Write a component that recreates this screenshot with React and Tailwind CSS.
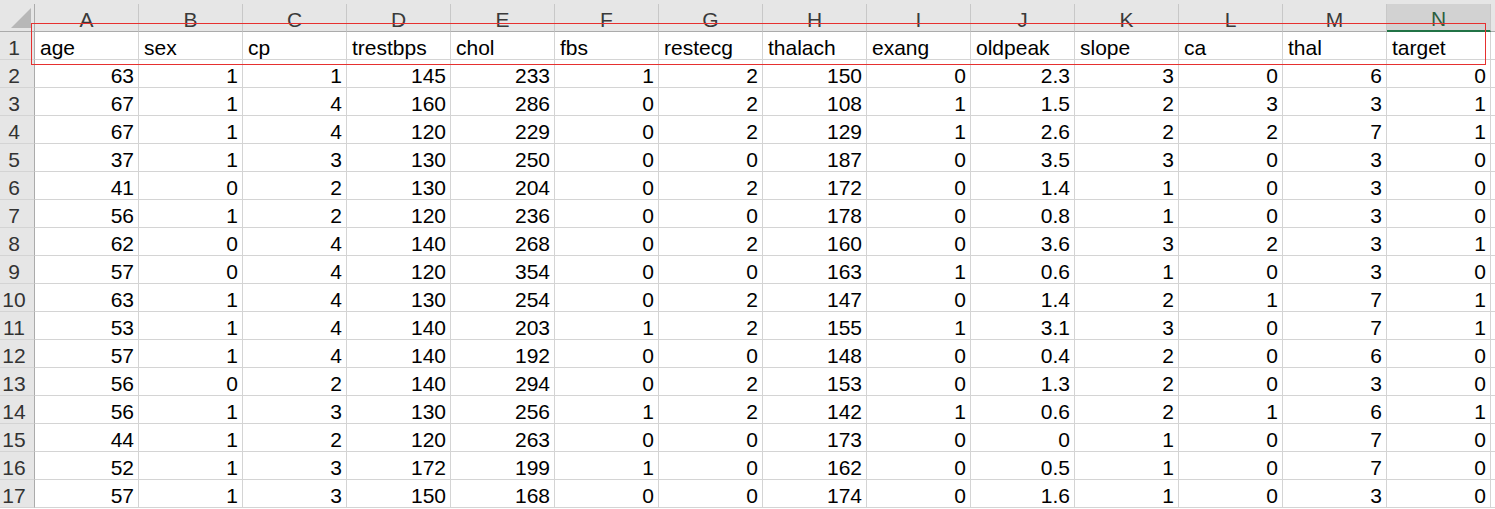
const columns = ["A", "B", "C", "D", "E", "F", "G", "H", "I", "J", "K", "L", "M", "N"];

const headers = [
  "age",
  "sex",
  "cp",
  "trestbps",
  "chol",
  "fbs",
  "restecg",
  "thalach",
  "exang",
  "oldpeak",
  "slope",
  "ca",
  "thal",
  "target",
];

const rows = [
  [63, 1, 1, 145, 233, 1, 2, 150, 0, "2.3", 3, 0, 6, 0],
  [67, 1, 4, 160, 286, 0, 2, 108, 1, "1.5", 2, 3, 3, 1],
  [67, 1, 4, 120, 229, 0, 2, 129, 1, "2.6", 2, 2, 7, 1],
  [37, 1, 3, 130, 250, 0, 0, 187, 0, "3.5", 3, 0, 3, 0],
  [41, 0, 2, 130, 204, 0, 2, 172, 0, "1.4", 1, 0, 3, 0],
  [56, 1, 2, 120, 236, 0, 0, 178, 0, "0.8", 1, 0, 3, 0],
  [62, 0, 4, 140, 268, 0, 2, 160, 0, "3.6", 3, 2, 3, 1],
  [57, 0, 4, 120, 354, 0, 0, 163, 1, "0.6", 1, 0, 3, 0],
  [63, 1, 4, 130, 254, 0, 2, 147, 0, "1.4", 2, 1, 7, 1],
  [53, 1, 4, 140, 203, 1, 2, 155, 1, "3.1", 3, 0, 7, 1],
  [57, 1, 4, 140, 192, 0, 0, 148, 0, "0.4", 2, 0, 6, 0],
  [56, 0, 2, 140, 294, 0, 2, 153, 0, "1.3", 2, 0, 3, 0],
  [56, 1, 3, 130, 256, 1, 2, 142, 1, "0.6", 2, 1, 6, 1],
  [44, 1, 2, 120, 263, 0, 0, 173, 0, "0", 1, 0, 7, 0],
  [52, 1, 3, 172, 199, 1, 0, 162, 0, "0.5", 1, 0, 7, 0],
  [57, 1, 3, 150, 168, 0, 0, 174, 0, "1.6", 1, 0, 3, 0],
];

const gridCols = "grid grid-cols-[35px_repeat(14,104px)_1fr]";

function RowNumber({ n }) {
  return (
    <div className="flex h-[28px] items-end justify-center border-r border-b border-r-[#ababab] border-b-[#d4d4d4] bg-[#e6e6e6] pr-[6px] text-[#333]">
      <span className="leading-[23px]">{n}</span>
    </div>
  );
}

function Cell({ children, align = "right" }) {
  return (
    <div
      className={`flex h-[28px] items-end overflow-hidden whitespace-nowrap border-r border-b border-[#d4d4d4] bg-white text-black ${
        align === "left" ? "justify-start pl-[5px]" : "justify-end pr-[4px]"
      }`}
    >
      <span className="leading-[23px]">{children}</span>
    </div>
  );
}

export default function App() {
  return (
    <div className="relative h-[509px] w-[1495px] overflow-hidden bg-white font-['Liberation_Sans',Arial,sans-serif] text-[21px]">
      {/* column letters */}
      <div className={`${gridCols} h-[32px] bg-[#e6e6e6] pt-[4px]`}>
        <div className="relative border-r border-b border-r-[#ababab] border-b-[#ababab]">
          <svg viewBox="0 0 20 20" className="absolute right-[3px] bottom-[3px] h-[20px] w-[20px]">
            <path d="M20 0 L20 20 L0 20 Z" fill="#b7b7b7" />
          </svg>
        </div>
        {columns.map((col) => {
          const active = col === "N";
          return (
            <div
              key={col}
              className={`flex items-end justify-center border-r border-r-[#c8c8c8] ${
                active
                  ? "border-b-2 border-b-[#217346] bg-[#d2d2d2] text-[#2d5e40]"
                  : "border-b border-b-[#ababab] text-[#3a3a3a]"
              }`}
            >
              <span className={`text-[21px] ${active ? "leading-[22px]" : "leading-[23px]"}`}>{col}</span>
            </div>
          );
        })}
        <div className="border-b border-b-[#ababab]" />
      </div>

      {/* header row */}
      <div className={gridCols}>
        <RowNumber n={1} />
        {headers.map((h) => (
          <Cell key={h} align="left">
            {h}
          </Cell>
        ))}
        <div className="h-[28px] border-b border-[#d4d4d4]" />
      </div>

      {rows.map((row, i) => (
        <div key={i} className={gridCols}>
          <RowNumber n={i + 2} />
          {row.map((v, j) => (
            <Cell key={j}>{v}</Cell>
          ))}
          <div className="h-[28px] border-b border-[#d4d4d4]" />
        </div>
      ))}

      {/* selection outline drawn over row 1 */}
      <div className="pointer-events-none absolute top-[23px] left-[31px] h-[42px] w-[1455px] border border-[#e6302f]" />
    </div>
  );
}
